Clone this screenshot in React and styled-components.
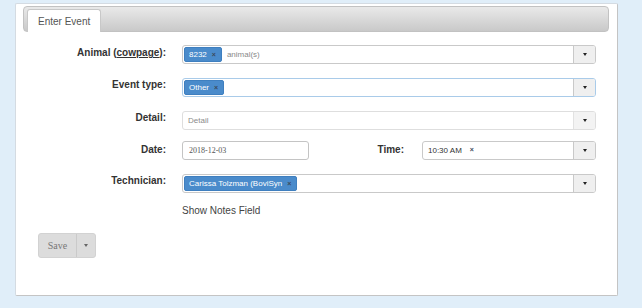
import React from "react";
import styled, { createGlobalStyle } from "styled-components";

const GlobalStyle = createGlobalStyle`
  html, body {
    margin: 0;
    padding: 0;
    background: #e0eef9;
    font-family: "Liberation Sans", Arial, sans-serif;
  }
`;

const Page = styled.div`
  width: 642px;
  height: 308px;
  padding: 3px 0 0 15px;
  box-sizing: border-box;
`;

const Panel = styled.div`
  width: 603px;
  height: 293px;
  box-sizing: border-box;
  background: #fff;
  border: 1px solid #d4dbe2;
  border-right-color: #c4c4c4;
  border-bottom-color: #c4c4c4;
  border-radius: 2px;
  padding: 2px 8px 0 7px;
`;

const TabBar = styled.div`
  height: 26px;
  box-sizing: border-box;
  background: linear-gradient(#e9e9e9, #c9c9c9);
  border: 1px solid #c2c2c2;
  border-radius: 4px;
  padding: 2px 0 0 3px;
  display: flex;
  align-items: flex-end;
`;

const Tab = styled.div`
  height: 23px;
  box-sizing: border-box;
  padding: 0 10px;
  display: flex;
  align-items: center;
  background: #fff;
  border: 1px solid #c8c8c8;
  border-bottom: none;
  border-radius: 3px 3px 0 0;
  font-size: 10px;
  color: #555;
  margin-bottom: -1px;
`;

const Form = styled.div`
  padding-top: 13px;
`;

const Row = styled.div`
  display: grid;
  grid-template-columns: 143px 414px;
  column-gap: 16px;
  align-items: start;
  margin-bottom: ${({ $mb }) => $mb}px;
`;

const Label = styled.label`
  text-align: right;
  font-size: 10px;
  font-weight: 700;
  color: #333;
  line-height: 13px;
  padding-top: ${({ $pt }) => ($pt === undefined ? 1 : $pt)}px;
  u {
    text-decoration: underline;
  }
`;

const SelectBox = styled.div`
  display: flex;
  height: 19px;
  box-sizing: border-box;
  width: ${({ $w }) => ($w ? `${$w}px` : "100%")};
  border: 1px solid ${({ $focus, $muted }) => ($focus ? "#a9cbe9" : $muted ? "#dedede" : "#c9c9c9")};
  border-radius: 3px;
  background: #fff;
`;

const Chosen = styled.div`
  flex: 1;
  display: flex;
  align-items: center;
  padding-left: 1px;
  gap: 5px;
  overflow: hidden;
`;

const Tag = styled.span`
  display: inline-flex;
  align-items: center;
  height: 15px;
  box-sizing: border-box;
  padding: 0 5px 0 4px;
  background: #4a8bcb;
  border: 1px solid #3f7fbf;
  border-radius: 2px;
  color: #fff;
  font-size: 8px;
  gap: 5px;
  white-space: nowrap;
`;

const Remove = styled.span`
  color: #3a4a5a;
  font-size: 7px;
  font-weight: 700;
`;

const Placeholder = styled.span`
  font-size: 8px;
  color: #8a8a8a;
  padding-left: ${({ $pl }) => $pl || 0}px;
`;

const Value = styled.span`
  font-size: 8px;
  color: #333;
  padding-left: 4px;
  display: inline-flex;
  gap: 8px;
`;

const Arrow = styled.div`
  width: 22px;
  box-sizing: border-box;
  border-left: 1px solid ${({ $muted }) => ($muted ? "#e2e2e2" : "#c9c9c9")};
  background: ${({ $muted }) => ($muted ? "#f3f3f3" : "#efefef")};
  border-radius: 0 2px 2px 0;
  display: flex;
  align-items: center;
  justify-content: center;
`;

const Caret = styled.span`
  width: 0;
  height: 0;
  border-left: 2.5px solid transparent;
  border-right: 2.5px solid transparent;
  border-top: 3px solid ${({ $c }) => $c || "#222"};
`;

const TextInput = styled.div`
  width: 127px;
  height: 19px;
  box-sizing: border-box;
  border: 1px solid #c4c4c4;
  border-radius: 3px;
  display: flex;
  align-items: center;
  padding-left: 6px;
  font-family: "Liberation Serif", "Times New Roman", serif;
  font-size: 8px;
  color: #555;
`;

const Split = styled.div`
  display: flex;
  align-items: start;
`;

const SideLabel = styled(Label)`
  flex: 1;
  margin-right: 18px;
`;

const NotesLink = styled.div`
  margin: 12px 0 0 159px;
  font-size: 10px;
  color: #444;
`;

const SaveGroup = styled.div`
  display: inline-flex;
  margin: 17px 0 0 15px;
  height: 25px;
  border: 1px solid #d2d2d2;
  border-radius: 3px;
  background: #dcdcdc;
  box-sizing: border-box;
`;

const SaveButton = styled.div`
  width: 37px;
  display: flex;
  align-items: center;
  justify-content: center;
  font-family: "Liberation Serif", "Times New Roman", serif;
  font-size: 10px;
  color: #777;
  border-right: 1px solid #cacaca;
`;

const SaveCaret = styled.div`
  width: 18px;
  display: flex;
  align-items: center;
  justify-content: center;
`;

const Select = ({ children, focus, muted, w }) => (
  <SelectBox $focus={focus} $muted={muted} $w={w}>
    <Chosen>{children}</Chosen>
    <Arrow $muted={muted}>
      <Caret />
    </Arrow>
  </SelectBox>
);

export default function App() {
  return (
    <>
      <GlobalStyle />
      <Page>
        <Panel>
          <TabBar>
            <Tab>Enter Event</Tab>
          </TabBar>
          <Form>
            <Row $mb={14}>
              <Label>
                Animal (<u>cowpage</u>):
              </Label>
              <Select>
                <Tag>
                  8232 <Remove>×</Remove>
                </Tag>
                <Placeholder>animal(s)</Placeholder>
              </Select>
            </Row>
            <Row $mb={14}>
              <Label $pt={0}>Event type:</Label>
              <Select focus>
                <Tag>
                  Other <Remove>×</Remove>
                </Tag>
              </Select>
            </Row>
            <Row $mb={11}>
              <Label $pt={-1}>Detail:</Label>
              <Select muted>
                <Placeholder $pl={4}>Detail</Placeholder>
              </Select>
            </Row>
            <Row $mb={14}>
              <Label $pt={2}>Date:</Label>
              <Split>
                <TextInput>2018-12-03</TextInput>
                <SideLabel $pt={2}>Time:</SideLabel>
                <Select w={174}>
                  <Value>
                    10:30 AM <Remove>×</Remove>
                  </Value>
                </Select>
              </Split>
            </Row>
            <Row $mb={0}>
              <Label $pt={0}>Technician:</Label>
              <Select>
                <Tag>
                  Carissa Tolzman (BoviSyn <Remove>×</Remove>
                </Tag>
              </Select>
            </Row>
            <NotesLink>Show Notes Field</NotesLink>
            <SaveGroup>
              <SaveButton>Save</SaveButton>
              <SaveCaret>
                <Caret $c="#666" />
              </SaveCaret>
            </SaveGroup>
          </Form>
        </Panel>
      </Page>
    </>
  );
}
